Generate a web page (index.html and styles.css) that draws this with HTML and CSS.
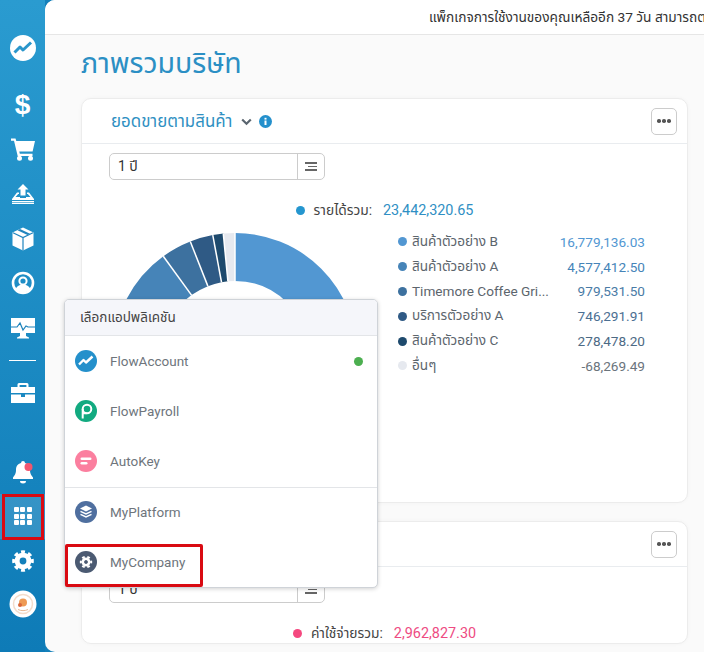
FILE: index.html
```html
<!DOCTYPE html>
<html lang="th">
<head>
<meta charset="utf-8">
<title>ภาพรวมบริษัท</title>
<link rel="stylesheet" href="styles.css">
</head>
<body>
<nav class="sidebar">
  <div class="nav-logo"><svg width="28" height="28" viewBox="0 0 28 28"><circle cx="14" cy="14" r="13" fill="#fff"/><path d="M5.500 18.500l5.500-5.500 3 3 8-7.500" fill="none" stroke="#2a96cb" stroke-width="3" stroke-linejoin="round"/></svg></div>
  <div class="nav-item nav-first"><span class="dollar">$</span></div>
  <div class="nav-item"><svg width="24" height="23" viewBox="0 0 24 23" fill="#fff"><path d="M0 .5h4.500l.8 2.500H24l-2.400 10.500H8.300l.5 2.200H21.500v2.300H6.700L3 2.800H0z"/><circle cx="8.500" cy="20.300" r="2.500"/><circle cx="19.500" cy="20.300" r="2.500"/></svg></div>
  <div class="nav-item"><svg width="24" height="20" viewBox="0 0 24 20" fill="#fff"><path d="M12 0l5.500 5.500h-3v6h-5v-6h-3z"/><path d="M1 15L6 8.500h2V10H7.200L4.500 13H9v1h6v-1h4.500L16.800 10H16V8.500h2L23 15v1H1z"/><rect x="1" y="17" width="22" height="1.200"/><rect x="1" y="18.800" width="22" height="1.200"/></svg></div>
  <div class="nav-item"><svg width="22" height="24" viewBox="0 0 22 24"><path d="M11 .5l10.500 5v13L11 23.500.5 18.500v-13z" fill="#fff"/><path d="M1 5.700l10 4.800 10-4.800M11 10.500v13" fill="none" stroke="#2185be" stroke-width="1.200"/><path d="M5.500 3.300l10 4.700 2.500-1.200-10-4.700z" fill="#2185be"/></svg></div>
  <div class="nav-item"><svg width="24" height="24" viewBox="0 0 24 24"><circle cx="12" cy="12" r="10" fill="none" stroke="#fff" stroke-width="2.600"/><circle cx="12" cy="10" r="3.600" fill="none" stroke="#fff" stroke-width="2"/><path d="M4.500 18c2-3.500 4.500-4.500 7.500-4.500s5.500 1 7.500 4.500a10 10 0 0 1-15 0z" fill="#fff"/></svg></div>
  <div class="nav-item"><svg width="26" height="22" viewBox="0 0 26 22"><path d="M1 1h24v15H1zM7 20.500l3-1.500v-3h6v3l3 1.500v1H7z" fill="#fff"/><path d="M1 10h6l3-4 3 7 3-4 2 1h7" fill="none" stroke="#1b82bb" stroke-width="1.200"/></svg></div>
  <div class="nav-rule"></div>
  <div class="nav-item"><svg width="24" height="22" viewBox="0 0 24 22" fill="#fff"><path d="M8 1h8a1.500 1.500 0 0 1 1.500 1.500V5H24v6H0V5h6.500V2.500A1.500 1.500 0 0 1 8 1zm.6 2v2h6.800V3z" fill-rule="evenodd"/><path d="M0 12.500h10V15h4v-2.500h10V21H0z"/></svg></div>
  <div class="nav-bottom">
    <div class="nav-item nav-bell"><svg width="22" height="24" viewBox="0 0 22 24"><path d="M11 1a2 2 0 0 1 2 2c3.500.8 5 3.500 5 7 0 4 1.500 5.500 3 7.500V19H1v-1.500C2.500 15.500 4 14 4 10c0-3.500 1.500-6.200 5-7a2 2 0 0 1 2-2z" fill="#fff"/><path d="M8 21h6a3 2.500 0 0 1-6 0z" fill="#fff"/><circle cx="16.500" cy="7" r="4" fill="#f2566f"/></svg></div>
    <div class="nav-item nav-apps">
      <div class="apps-grid"><i></i><i></i><i></i><i></i><i></i><i></i><i></i><i></i><i></i></div>
    </div>
    <div class="nav-item"><svg width="22" height="22" viewBox="-12 -12 24 24" fill="none" stroke="#fff"><circle r="6.400" stroke-width="5.400"/><circle r="9.800" stroke-width="4" pathLength="8" stroke-dasharray=".55 .45" stroke-dashoffset=".275"/></svg></div>
    <div class="nav-avatar"><svg width="28" height="28" viewBox="0 0 28 28"><circle cx="14" cy="14" r="13.500" fill="#fff"/><circle cx="14" cy="14" r="9.500" fill="none" stroke="#f3dccb" stroke-width="1.500"/><circle cx="14" cy="12.500" r="4" fill="#ee9a54"/><circle cx="11" cy="15" r="2" fill="#d9663a"/><path d="M9 19.500c3 1.500 7 1.500 10 0" fill="none" stroke="#e7b894" stroke-width="1"/></svg></div>
  </div>
</nav>

<main class="main">
  <header class="topbar"><span>แพ็กเกจการใช้งานของคุณเหลืออีก 37 วัน สามารถต</span></header>
  <h1 class="page-title">ภาพรวมบริษัท</h1>

  <section class="card card-first">
    <div class="card-head">
      <h2 class="card-title">ยอดขายตามสินค้า</h2>
      <svg class="chev" width="11" height="8" viewBox="0 0 11 8"><path d="M1.200 1.500l4.300 4.300 4.300-4.300" fill="none" stroke="#5b6670" stroke-width="2.200"/></svg>
      <svg class="info" width="13" height="13" viewBox="0 0 13 13"><circle cx="6.500" cy="6.500" r="6.500" fill="#2490cc"/><rect x="5.500" y="5.500" width="2" height="4.500" fill="#fff"/><rect x="5.500" y="2.800" width="2" height="1.800" fill="#fff"/></svg>
      <button class="more"><i></i><i></i><i></i></button>
    </div>
    <div class="card-body">
      <div class="select"><span class="select-value">1 ปี</span><span class="select-btn"><b class="l1"></b><b class="l2"></b><b class="l3"></b></span></div>
      <div class="total"><i class="dot dot-blue"></i><span class="total-label">รายได้รวม:</span><span class="total-value">23,442,320.65</span></div>
      <div class="chart-row">
        <svg class="donut" width="244" height="244" viewBox="-122 -122 244 244">
          <g fill="none" stroke-width="48" transform="rotate(-90)">
            <circle r="98" pathLength="360" stroke="#5297d2" stroke-dasharray="254 106"/>
            <circle r="98" pathLength="360" stroke="#4684b8" stroke-dasharray="70 290" stroke-dashoffset="-254"/>
            <circle r="98" pathLength="360" stroke="#3d719f" stroke-dasharray="14.500 345.500" stroke-dashoffset="-324"/>
            <circle r="98" pathLength="360" stroke="#2f5a85" stroke-dasharray="11 349" stroke-dashoffset="-338.500"/>
            <circle r="98" pathLength="360" stroke="#1e4a6d" stroke-dasharray="5 355" stroke-dashoffset="-349.500"/>
            <circle r="98" pathLength="360" stroke="#e6e9ef" stroke-dasharray="5.500 354.500" stroke-dashoffset="-354.500"/>
          </g>
          <g stroke="#fff" stroke-width="1.500">
            <line y1="-74" y2="-122"/>
            <line y1="-74" y2="-122" transform="rotate(-5.500)"/>
            <line y1="-74" y2="-122" transform="rotate(-10.500)"/>
            <line y1="-74" y2="-122" transform="rotate(-21.500)"/>
            <line y1="-74" y2="-122" transform="rotate(-36)"/>
            <line y1="-74" y2="-122" transform="rotate(-106)"/>
          </g>
        </svg>
        <ul class="legend">
          <li><i class="dot c1"></i><span class="lg-name">สินค้าตัวอย่าง B</span><span class="lg-val v1">16,779,136.03</span></li>
          <li><i class="dot c2"></i><span class="lg-name">สินค้าตัวอย่าง A</span><span class="lg-val v2">4,577,412.50</span></li>
          <li><i class="dot c3"></i><span class="lg-name">Timemore Coffee Gri...</span><span class="lg-val v3">979,531.50</span></li>
          <li><i class="dot c4"></i><span class="lg-name">บริการตัวอย่าง A</span><span class="lg-val v4">746,291.91</span></li>
          <li><i class="dot c5"></i><span class="lg-name">สินค้าตัวอย่าง C</span><span class="lg-val v5">278,478.20</span></li>
          <li><i class="dot c6"></i><span class="lg-name">อื่นๆ</span><span class="lg-val v6">-68,269.49</span></li>
        </ul>
      </div>
    </div>
  </section>

  <section class="card">
    <div class="card-head">
      <h2 class="card-title">ค่าใช้จ่าย</h2>
      <button class="more"><i></i><i></i><i></i></button>
    </div>
    <div class="card-body">
      <div class="select"><span class="select-value">1 ปี</span><span class="select-btn"><b class="l1"></b><b class="l2"></b><b class="l3"></b></span></div>
      <div class="total"><i class="dot dot-pink"></i><span class="total-label">ค่าใช้จ่ายรวม:</span><span class="total-value pink">2,962,827.30</span></div>
    </div>
  </section>
</main>

<aside class="app-menu">
  <div class="app-head">เลือกแอปพลิเคชัน</div>
  <div class="app-row">
    <svg width="22" height="22" viewBox="0 0 22 22"><circle cx="11" cy="11" r="11" fill="#2490cb"/><path d="M4 14.500l4.500-4.500 2.500 2.500 6.500-6" fill="none" stroke="#fff" stroke-width="2.400" stroke-linejoin="round"/></svg>
    <span>FlowAccount</span><i class="status"></i>
  </div>
  <div class="app-row">
    <svg width="22" height="22" viewBox="0 0 22 22"><circle cx="11" cy="11" r="11" fill="#12aa80"/><circle cx="12" cy="9" r="4.300" fill="none" stroke="#fff" stroke-width="2"/><path d="M7.700 9v9.500" stroke="#fff" stroke-width="2" fill="none"/><path d="M7.700 13.300h4" stroke="#fff" stroke-width="2"/></svg>
    <span>FlowPayroll</span>
  </div>
  <div class="app-row">
    <svg width="22" height="22" viewBox="0 0 22 22"><circle cx="11" cy="11" r="11" fill="#fb7f9f"/><rect x="5.500" y="7.500" width="11" height="2.600" rx="1.300" fill="#fff"/><rect x="5.500" y="12" width="7" height="2.600" rx="1.300" fill="#fff"/></svg>
    <span>AutoKey</span>
  </div>
  <div class="app-rule"></div>
  <div class="app-row">
    <svg width="22" height="22" viewBox="0 0 22 22"><circle cx="11" cy="11" r="11" fill="#4f6f9f"/><path d="M11 4.500l6 3-6 3-6-3z" fill="#fff"/><path d="M5.500 10.300L11 13l5.500-2.700M5.500 13.300L11 16l5.500-2.700" fill="none" stroke="#fff" stroke-width="1.500"/></svg>
    <span>MyPlatform</span>
  </div>
  <div class="app-row">
    <svg width="22" height="22" viewBox="-11 -11 22 22" fill="none"><circle r="11" fill="#4b5a72"/><circle r="3.200" stroke="#fff" stroke-width="2.600"/><circle r="5.200" stroke="#fff" stroke-width="2" pathLength="6" stroke-dasharray=".5 .5" stroke-dashoffset=".25"/></svg>
    <span>MyCompany</span>
  </div>
</aside>

<div class="mark mark-nav"></div>
<div class="mark mark-app"></div>
</body>
</html>
```

FILE: styles.css
```css
* { box-sizing: border-box; }
html, body { height: 100%; }
body {
  margin: 0;
  height: 652px;
  overflow: hidden;
  display: flex;
  background: #1480ba;
  font-family: Roboto, "Noto Sans Thai", "Noto Sans", sans-serif;
  font-size: 14px;
  color: #444;
  position: relative;
}

/* sidebar */
.sidebar {
  width: 45px;
  flex: none;
  height: 652px;
  background: linear-gradient(180deg, #2a9bd0 0%, #0e7bb7 100%);
  display: flex;
  flex-direction: column;
  align-items: center;
  padding-top: 34px;
}
.nav-logo { height: 28px; display: flex; }
.nav-item {
  width: 45px;
  height: 44.5px;
  flex: none;
  display: flex;
  align-items: center;
  justify-content: center;
}
.nav-first { margin-top: 21px; }
.dollar { font: bold 28px "Liberation Sans", sans-serif; color: #fff; line-height: 1; }
.nav-rule { width: 27px; height: 1px; background: #fff; margin: 10px 0 10px; flex: none; }
.nav-bottom { margin-top: auto; display: flex; flex-direction: column; align-items: center; padding-bottom: 34px; }
.nav-apps { background: rgba(255,255,255,.14); }
.apps-grid { display: grid; grid-template-columns: repeat(3, 5px); grid-auto-rows: 5px; gap: 1.500px; }
.apps-grid i { background: #fff; border-radius: 1px; }
.nav-avatar { height: 28px; margin-top: 7px; display: flex; }

/* main */
.main {
  flex: 1;
  min-width: 0;
  height: 652px;
  overflow: hidden;
  background: #fafafa;
  border-radius: 10px 0 0 10px;
}
.topbar {
  height: 35px;
  background: #fff;
  border-bottom: 1px solid #e6e6e6;
  padding: 8px 0 0 384px;
  white-space: nowrap;
  overflow: hidden;
  font-size: 13.700px;
  line-height: 18px;
  color: #333;
}
.page-title {
  margin: 10px 0 16px 36px;
  height: 37px;
  font-size: 28.500px;
  line-height: 37px;
  font-weight: 400;
  color: #2b8fc4;
}
.card {
  width: 607px;
  margin-left: 36px;
  background: #fff;
  border: 1px solid #ececec;
  border-radius: 10px;
  box-shadow: 0 0 4px rgba(0,0,0,.03);
}
.card-first { height: 405px; margin-bottom: 18px; }
.card-head {
  height: 45px;
  display: flex;
  align-items: center;
  padding: 0 10px 0 29px;
  border-bottom: 1px solid #e9ecef;
}
.card-title { margin: 2px 0 0; font-size: 16.900px; font-weight: 400; color: #2f90c2; }
.chev { margin: 2px 0 0 9px; }
.info { margin: 1px 0 0 7px; }
.more {
  margin-left: auto;
  width: 26px;
  height: 27px;
  padding: 0;
  background: #fff;
  border: 1px solid #ccc;
  border-radius: 5px;
  display: flex;
  align-items: center;
  justify-content: center;
  gap: 1.500px;
}
.more i { width: 3.500px; height: 3.500px; border-radius: 50%; background: #555; }
.card-body { padding: 9px 0 0 27px; }
.select {
  width: 216px;
  height: 27px;
  border: 1px solid #ccc;
  border-radius: 5px;
  display: flex;
  align-items: center;
}
.select-value { flex: 1; padding-left: 8px; font-size: 14px; color: #333; }
.select-btn {
  width: 27px;
  height: 100%;
  border-left: 1px solid #ccc;
  display: flex;
  flex-direction: column;
  align-items: flex-end;
  justify-content: center;
  gap: 2px;
  padding-right: 7px;
}
.select-btn b { height: 1.500px; background: #666; }
.select-btn .l1 { width: 12px; }
.select-btn .l2 { width: 9px; }
.select-btn .l3 { width: 12px; }
.total {
  margin: 20px 0 0 -27px;
  height: 20px;
  display: flex;
  align-items: center;
  justify-content: center;
}
.dot { width: 9px; height: 9px; border-radius: 50%; flex: none; }
.dot-blue { background: #2596cf; }
.dot-pink { background: #f5487f; }
.total-label { margin-left: 9px; color: #444; font-size: 13.800px; }
.total-value { margin-left: 11px; color: #2f8fc4; font-size: 14.400px; }
.total-value.pink { color: #ee4b82; }
.chart-row { display: flex; margin: 13px 0 0 4px; }
.donut { flex: none; }
.legend {
  list-style: none;
  margin: -3.500px 0 0 41px;
  padding: 0;
  width: 247px;
}
.legend li { height: 24.800px; display: flex; align-items: center; }
.lg-name { margin-left: 5px; flex: 1; white-space: nowrap; color: #5c656d; font-size: 13.600px; }
.lg-val { font-size: 13.600px; }
.c1 { background: #5297d2; } .v1 { color: #5297d2; }
.c2 { background: #4684b8; } .v2 { color: #4684b8; }
.c3 { background: #3d719f; } .v3 { color: #4a7ba6; }
.c4 { background: #2f5a85; } .v4 { color: #4c6f92; }
.c5 { background: #1e4a6d; } .v5 { color: #4d6a85; }
.c6 { background: #e6e9ef; } .v6 { color: #6b747c; }

/* app menu */
.app-menu {
  position: absolute;
  left: 64px;
  top: 299px;
  width: 314px;
  height: 289px;
  background: #fff;
  border: 1px solid #cfd3d8;
  border-radius: 5px;
  box-shadow: 0 1px 4px rgba(0,0,0,.18);
  overflow: hidden;
}
.app-head {
  height: 36px;
  background: #f5f6fa;
  border-bottom: 1px solid #e3e5e8;
  padding: 8px 0 0 15px;
  font-size: 13.500px;
  line-height: 18px;
  color: #444;
}
.app-row {
  height: 50px;
  display: flex;
  align-items: center;
  padding: 0 14px 0 10px;
  color: #6e757c;
  font-size: 13.500px;
}
.app-row span { margin-left: 13px; flex: 1; }
.status { width: 9px; height: 9px; border-radius: 50%; background: #4caf50; }
.app-rule { height: 1px; margin: 1px 0 -1px; background: #e3e5e8; }

/* annotation marks */
.mark { position: absolute; border: 3px solid #d90a12; }
.mark-nav { left: 2px; top: 494px; width: 42px; height: 46px; }
.mark-app { left: 65px; top: 544px; width: 138px; height: 43px; border-radius: 2px; }
```
